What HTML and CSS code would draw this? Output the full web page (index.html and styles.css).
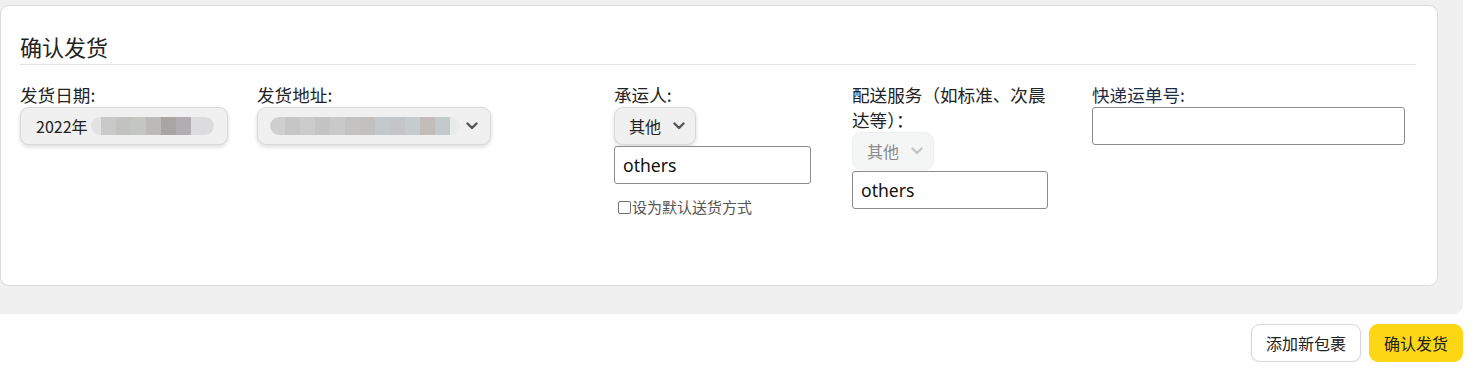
FILE: index.html
```html
<!DOCTYPE html>
<html lang="zh-CN">
<head>
<meta charset="utf-8">
<title>确认发货</title>
<link rel="stylesheet" href="styles.css">
</head>
<body>
<div class="panel">
  <section class="card">
    <h2 class="card-title">确认发货</h2>
    <div class="fields">
      <div class="field f-date">
        <label class="label">发货日期:</label>
        <div class="select select-date">
          <span class="select-text">2022年</span>
          <span class="blur blur-date"></span>
        </div>
      </div>
      <div class="field f-addr">
        <label class="label">发货地址:</label>
        <div class="select select-addr">
          <span class="blur blur-addr"></span>
          <svg class="chev" viewBox="0 0 12 8" width="12" height="8"><path d="M1.5 1.5 L6 6 L10.5 1.5" fill="none" stroke="currentColor" stroke-width="2.4" stroke-linecap="round" stroke-linejoin="round"/></svg>
        </div>
      </div>
      <div class="field f-carrier">
        <label class="label">承运人:</label>
        <div class="select select-small">
          <span class="select-text">其他</span>
          <svg class="chev" viewBox="0 0 12 8" width="12" height="8"><path d="M1.5 1.5 L6 6 L10.5 1.5" fill="none" stroke="currentColor" stroke-width="2.4" stroke-linecap="round" stroke-linejoin="round"/></svg>
        </div>
        <input class="text-input w197" type="text" value="others">
        <label class="check-row"><input class="check" type="checkbox">设为默认送货方式</label>
      </div>
      <div class="field f-service">
        <label class="label">配送服务（如标准、次晨达等）：</label>
        <div class="select select-small disabled">
          <span class="select-text">其他</span>
          <svg class="chev" viewBox="0 0 12 8" width="12" height="8"><path d="M1.5 1.5 L6 6 L10.5 1.5" fill="none" stroke="currentColor" stroke-width="2.4" stroke-linecap="round" stroke-linejoin="round"/></svg>
        </div>
        <input class="text-input w196" type="text" value="others">
      </div>
      <div class="field f-track">
        <label class="label label-track">快递运单号:</label>
        <input class="text-input w313" type="text" value="">
      </div>
    </div>
  </section>
</div>
<div class="actions">
  <button class="btn btn-secondary">添加新包裹</button>
  <button class="btn btn-primary">确认发货</button>
</div>
</body>
</html>
```

FILE: styles.css
```css
* { box-sizing: border-box; }

body {
  margin: 0;
  background: #ffffff;
  font-family: "Noto Sans", "Noto Sans CJK SC", sans-serif;
  color: #222222;
}

.panel {
  width: 1463px;
  background: #eff0ef;
  padding: 5px 25px 28px 0;
  border-radius: 0 0 9px 0;
}

.card {
  height: 281px;
  background: #ffffff;
  border: 1px solid #dadada;
  border-radius: 9px;
  padding: 0 21px 0 19px;
}

.card-title {
  margin: 0;
  padding-top: 25px;
  height: 59px;
  font-family: "Noto Sans CJK SC", sans-serif;
  font-weight: 400;
  font-size: 22px;
  line-height: 30px;
  color: #222222;
  border-bottom: 1px solid #e4e4e4;
}

.fields {
  display: grid;
  grid-template-columns: 237px 357px 238px 240px 1fr;
  padding-top: 17px;
}

.field {
  display: flex;
  flex-direction: column;
  align-items: flex-start;
}

.f-service { width: 200px; }

.label {
  font-family: "Noto Sans CJK SC", sans-serif;
  font-size: 17.6px;
  line-height: 25px;
  color: #222222;
}

.label-track { color: #1f2d44; }

.select {
  height: 38px;
  margin-bottom: 1px;
  display: flex;
  align-items: center;
  background: #eff0ef;
  border: 1px solid #d8d9d8;
  border-radius: 9px;
  box-shadow: 0 2px 4px rgba(0, 0, 0, 0.14);
  color: #222222;
  font-family: "Noto Sans CJK SC", sans-serif;
  font-size: 16px;
}

.select .chev { color: #555555; flex: none; }

.select-date {
  width: 208px;
  padding-left: 15px;
}

.select-addr {
  width: 234px;
  padding-left: 12px;
  padding-right: 12px;
  justify-content: space-between;
}

.select-small {
  width: 82px;
  padding-left: 14px;
  padding-right: 10px;
  justify-content: space-between;
}

.select.disabled {
  background: #f4f6f6;
  border-color: #eef0f0;
  box-shadow: none;
  color: #8a8a8a;
}
.select.disabled .chev { color: #c4c6c6; }

.blur {
  display: block;
  height: 18px;
  filter: blur(0.6px);
  border-radius: 9px;
}

.blur-date {
  width: 123px;
  margin-left: 3px;
  background: linear-gradient(90deg,
    #e2e2e2 0 10px, #c9c9c9 10px 25px, #c2c2c0 25px 40px, #c4c6c2 40px 55px,
    #bcbab8 55px 70px, #a9a5a3 70px 85px, #b1adb3 85px 100px, #dcdcdf 100px 123px);
}

.blur-addr {
  width: 190px;
  background: linear-gradient(90deg,
    #cfcfcf 0 15px, #c6c6c6 15px 30px, #cbcbcb 30px 45px, #c4c4c4 45px 60px,
    #c9c9c9 60px 75px, #c3c3c3 75px 90px, #c2c0bf 90px 105px, #c3c8cb 105px 120px,
    #c4c5c6 120px 135px, #c6cbce 135px 150px, #c2bdbb 150px 165px, #c4c9cb 165px 180px,
    #e9eaea 180px 190px);
}

.text-input {
  height: 38px;
  border: 1px solid #8c8c8c;
  border-radius: 3px;
  padding: 0 8px;
  font-family: "Noto Sans", sans-serif;
  font-size: 17.6px;
  color: #111111;
  background: #ffffff;
  outline: none;
}

.w197 { width: 197px; }
.w196 { width: 196px; }
.w313 { width: 313px; }

.check-row {
  display: flex;
  align-items: center;
  margin-top: 14px;
  margin-left: 4px;
  font-family: "Noto Sans CJK SC", sans-serif;
  font-size: 15px;
  line-height: 18px;
  color: #555555;
}

.check {
  appearance: none;
  -webkit-appearance: none;
  width: 13px;
  height: 13px;
  margin: 0 1px 0 0;
  border: 1px solid #6f6f6f;
  border-radius: 2px;
  background: #ffffff;
}

.actions {
  width: 1463px;
  display: flex;
  justify-content: flex-end;
  gap: 8px;
  padding-top: 10px;
}

.btn {
  height: 38px;
  padding: 0 14px;
  border-radius: 9px;
  font-family: "Noto Sans CJK SC", sans-serif;
  font-size: 16px;
  color: #222222;
  cursor: pointer;
}

.btn-secondary {
  background: #ffffff;
  border: 1px solid #d6d8d8;
  box-shadow: 0 1px 3px rgba(0, 0, 0, 0.08);
}

.btn-primary {
  background: #fdd614;
  border: 1px solid #fdd614;
}
```
